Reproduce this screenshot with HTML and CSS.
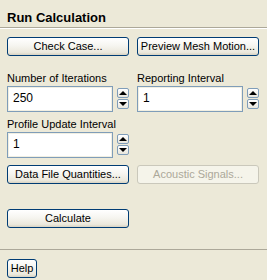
FILE: index.html
```html
<!DOCTYPE html>
<html lang="en">
<head>
  <meta charset="UTF-8" />
  <title>Run Calculation</title>
  <link rel="stylesheet" href="styles.css">
</head>
<body>
  <div class="panel">
    <h1 class="title">Run Calculation</h1>
    <div class="content">
      <div class="row">
        <button class="btn">Check Case...</button>
        <button class="btn">Preview Mesh Motion...</button>
      </div>

      <div class="row fields">
        <div class="field">
          <label class="label">Number of Iterations</label>
          <div class="spin">
            <div class="entry">250</div>
            <div class="arrows">
              <span class="arrow"><i class="up"></i></span>
              <span class="arrow"><i class="down"></i></span>
            </div>
          </div>
        </div>
        <div class="field">
          <label class="label">Reporting Interval</label>
          <div class="spin">
            <div class="entry">1</div>
            <div class="arrows">
              <span class="arrow"><i class="up"></i></span>
              <span class="arrow"><i class="down"></i></span>
            </div>
          </div>
        </div>
      </div>

      <div class="row fields second">
        <div class="field">
          <label class="label">Profile Update Interval</label>
          <div class="spin">
            <div class="entry">1</div>
            <div class="arrows">
              <span class="arrow"><i class="up"></i></span>
              <span class="arrow"><i class="down"></i></span>
            </div>
          </div>
        </div>
      </div>

      <div class="row more">
        <button class="btn">Data File Quantities...</button>
        <button class="btn" disabled>Acoustic Signals...</button>
      </div>

      <div class="row calc">
        <button class="btn">Calculate</button>
      </div>
    </div>

    <div class="footer">
      <button class="btn help">Help</button>
    </div>
  </div>
</body>
</html>
```

FILE: styles.css
```css
html, body {
  margin: 0;
  padding: 0;
  background: #ece9d8;
  font-family: "Liberation Sans", Arial, sans-serif;
  font-size: 11px;
  color: #000;
}
.panel {
  width: 267px;
  height: 280px;
  overflow: hidden;
}
.title {
  margin: 0;
  padding: 10px 7px 2px;
  font-size: 13px;
  line-height: 15px;
  font-weight: bold;
  border-bottom: 1px solid #aca899;
  box-shadow: 0 1px 0 #fff;
}
.content {
  padding: 0 7px;
}
.row {
  display: grid;
  grid-template-columns: 122px 122px;
  column-gap: 8px;
  margin-top: 9px;
}
.btn {
  height: 19px;
  margin: 0;
  padding: 0;
  font-family: inherit;
  font-size: 11px;
  line-height: 17px;
  color: #000;
  border: 1px solid #003c74;
  border-radius: 3px;
  background: linear-gradient(#ffffff, #f6f5f0 45%, #ebe8dc 85%, #d8d2c2);
}
.btn:disabled {
  color: #aca899;
  border-color: #cac8bb;
  background: #f5f4ea;
}
.fields {
  margin-top: 16px;
}
.fields.second {
  margin-top: 6px;
}
.label {
  display: block;
  line-height: 13px;
  margin-bottom: 1px;
  white-space: nowrap;
}
.spin {
  display: flex;
  gap: 4px;
}
.entry {
  width: 106px;
  height: 26px;
  box-sizing: border-box;
  border: 1px solid #7f9db9;
  box-shadow: inset 0 0 0 1px #f1efe2;
  background: #fff;
  padding: 4px 5px;
  font-size: 12px;
  line-height: 15px;
}
.arrows {
  display: flex;
  flex-direction: column;
  gap: 1px;
  margin-top: 2px;
}
.arrow {
  width: 12px;
  height: 10px;
  box-sizing: border-box;
  border: 1px solid #7f9db9;
  border-radius: 2px;
  background: linear-gradient(#ffffff, #e8e6dc);
  display: flex;
  align-items: center;
  justify-content: center;
}
.up, .down {
  width: 0;
  height: 0;
  border-left: 4px solid transparent;
  border-right: 4px solid transparent;
}
.up {
  border-bottom: 4px solid #000;
}
.down {
  border-top: 4px solid #000;
}
.more {
  margin-top: 7px;
}
.calc {
  margin-top: 25px;
}
.footer {
  margin-top: 21px;
  border-top: 1px solid #aca899;
  padding: 9px 7px 0;
}
.help {
  width: 30px;
}
```
